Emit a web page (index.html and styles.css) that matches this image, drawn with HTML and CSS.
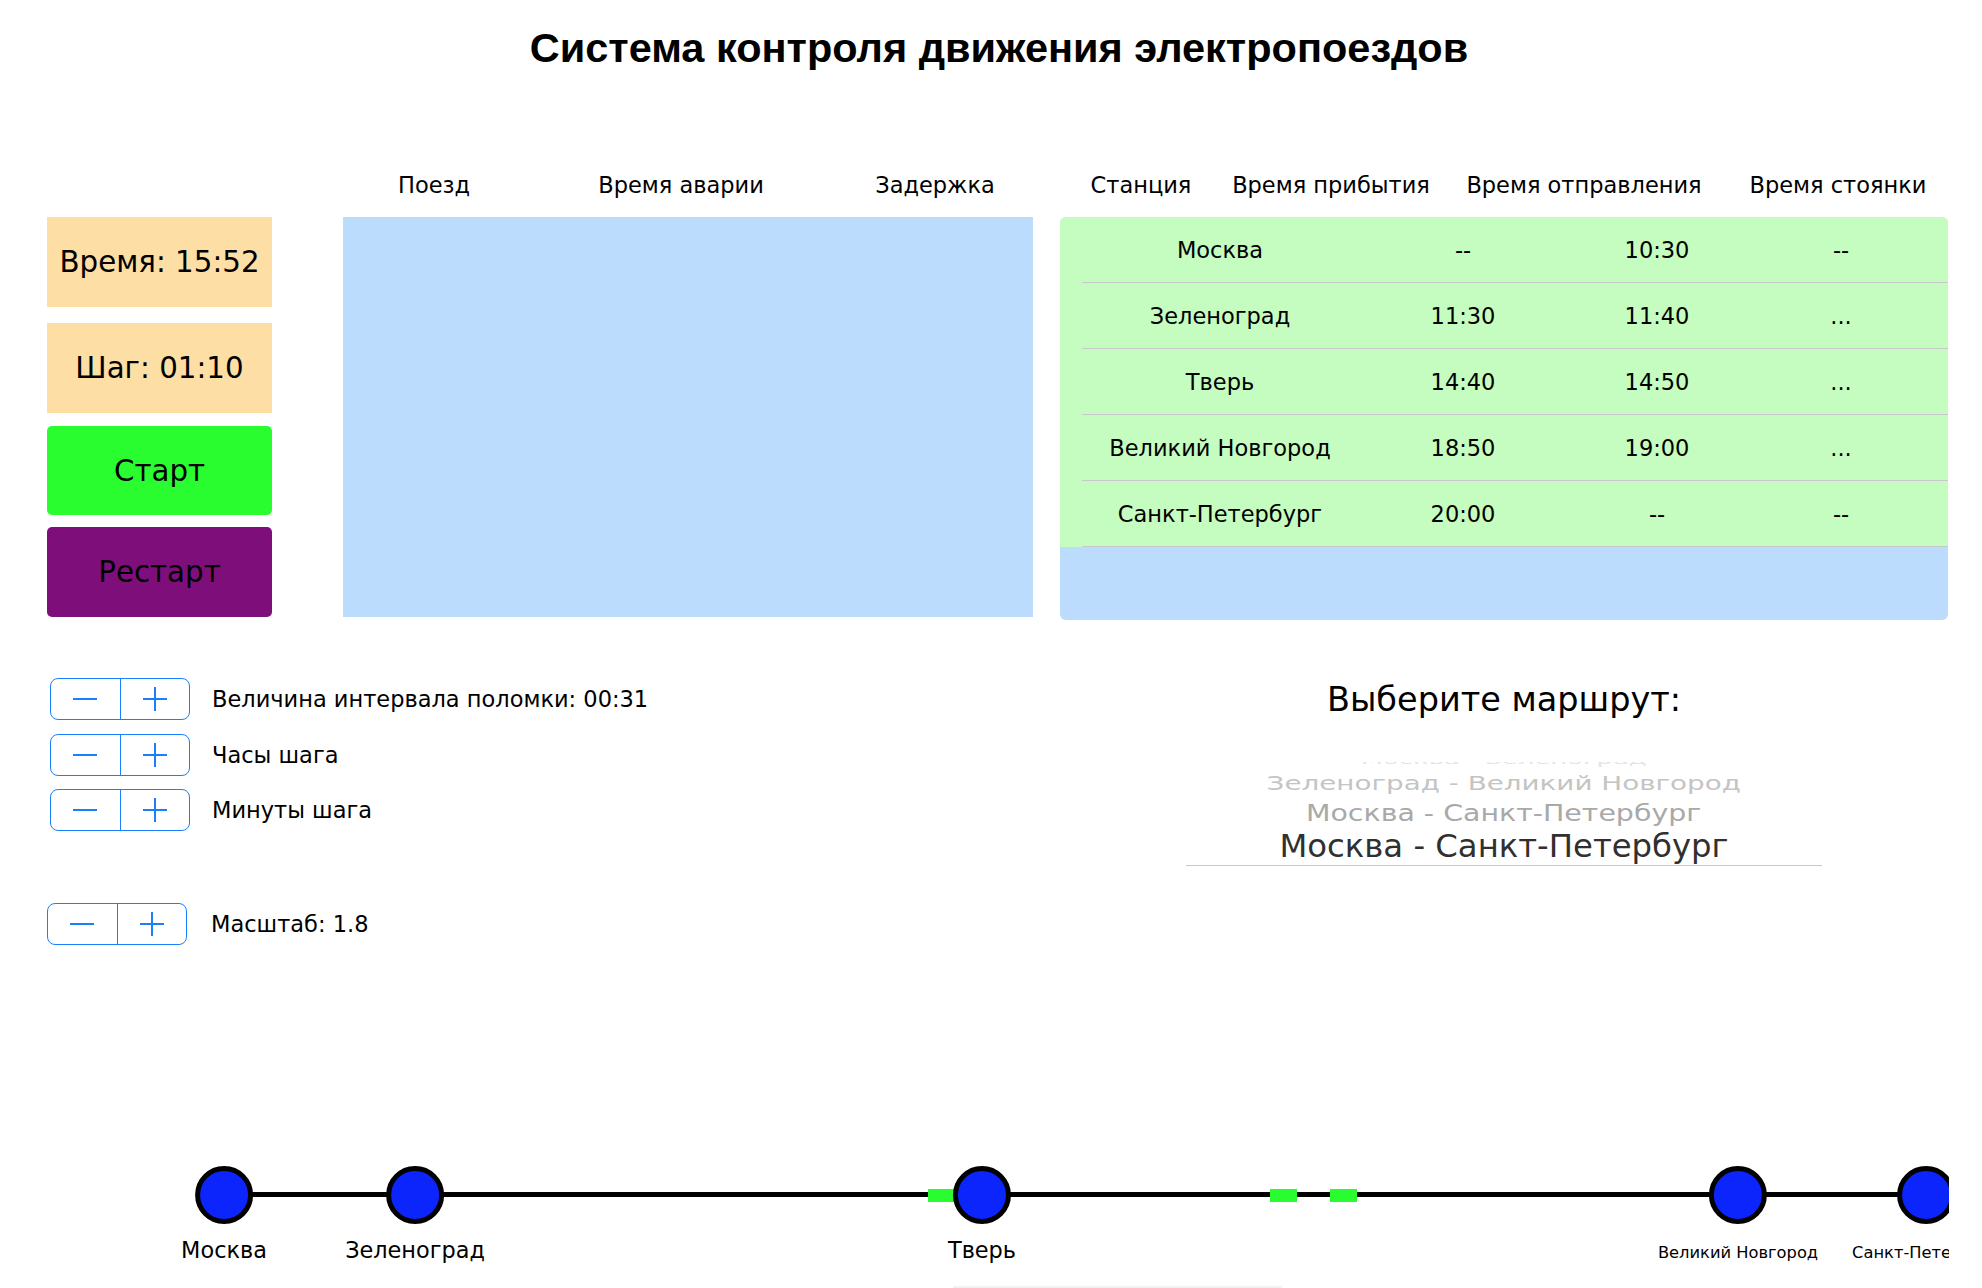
FILE: index.html
```html
<!DOCTYPE html>
<html lang="ru">
<head>
<meta charset="utf-8">
<title>Система контроля движения электропоездов</title>
<link rel="stylesheet" href="styles.css">
</head>
<body>
<div class="app">
  <h1 class="title">Система контроля движения электропоездов</h1>

  <div class="top">
    <div class="left-col">
      <div class="info-box box-time">Время: 15:52</div>
      <div class="info-box box-step">Шаг: 01:10</div>
      <div class="btn btn-start">Старт</div>
      <div class="btn btn-restart">Рестарт</div>
    </div>

    <div class="mid">
      <div class="thead mid-head">
        <span>Поезд</span><span>Время аварии</span><span>Задержка</span>
      </div>
      <div class="accidents"></div>
    </div>

    <div class="right">
      <div class="thead sched-head">
        <span>Станция</span><span>Время прибытия</span><span>Время отправления</span><span>Время стоянки</span>
      </div>
      <div class="schedule">
        <div class="srow"><div class="srow-in"><span>Москва</span><span>--</span><span>10:30</span><span>--</span></div></div>
        <div class="srow"><div class="srow-in"><span>Зеленоград</span><span>11:30</span><span>11:40</span><span>...</span></div></div>
        <div class="srow"><div class="srow-in"><span>Тверь</span><span>14:40</span><span>14:50</span><span>...</span></div></div>
        <div class="srow"><div class="srow-in"><span>Великий Новгород</span><span>18:50</span><span>19:00</span><span>...</span></div></div>
        <div class="srow"><div class="srow-in"><span>Санкт-Петербург</span><span>20:00</span><span>--</span><span>--</span></div></div>
      </div>
    </div>
  </div>

  <div class="lower">
    <div class="controls">
      <div class="ctl">
        <div class="stepper"><span class="st-minus"></span><span class="st-plus"></span></div>
        <span class="ctl-label">Величина интервала поломки: 00:31</span>
      </div>
      <div class="ctl">
        <div class="stepper"><span class="st-minus"></span><span class="st-plus"></span></div>
        <span class="ctl-label">Часы шага</span>
      </div>
      <div class="ctl">
        <div class="stepper"><span class="st-minus"></span><span class="st-plus"></span></div>
        <span class="ctl-label">Минуты шага</span>
      </div>
      <div class="ctl ctl-scale">
        <div class="stepper"><span class="st-minus"></span><span class="st-plus"></span></div>
        <span class="ctl-label">Масштаб: 1.8</span>
      </div>
    </div>

    <div class="route">
      <div class="route-title">Выберите маршрут:</div>
      <div class="picker">
        <div class="pk pk-0">Москва - Зеленоград</div>
        <div class="pk pk-1">Зеленоград - Великий Новгород</div>
        <div class="pk pk-2">Москва - Санкт-Петербург</div>
        <div class="pk pk-3">Москва - Санкт-Петербург</div>
      </div>
    </div>
  </div>

  <div class="map">
    <div class="track"></div>
    <div class="train" style="left:928px"></div>
    <div class="train" style="left:1270px"></div>
    <div class="train" style="left:1330px"></div>
    <div class="node" style="left:224px"><span class="dot"></span><span class="node-label">Москва</span></div>
    <div class="node" style="left:415px"><span class="dot"></span><span class="node-label">Зеленоград</span></div>
    <div class="node" style="left:982px"><span class="dot"></span><span class="node-label">Тверь</span></div>
    <div class="node node-small" style="left:1738px"><span class="dot"></span><span class="node-label">Великий Новгород</span></div>
    <div class="node node-small" style="left:1926px"><span class="dot"></span><span class="node-label">Санкт-Петербург</span></div>
    <div class="scroll-hint"></div>
  </div>
</div>
</body>
</html>
```

FILE: styles.css
```css
* { box-sizing: border-box; }
html, body { margin: 0; padding: 0; background: #fff; }
body {
  width: 1982px;
  height: 1288px;
  overflow: hidden;
  font-family: "DejaVu Sans", "Liberation Sans", sans-serif;
  color: #000;
}
.app { width: 1982px; height: 1288px; position: relative; }

.title {
  margin: 0;
  height: 160px;
  padding-top: 24px;
  padding-left: 16px;
  font-family: "Liberation Sans", Arial, sans-serif;
  font-weight: bold;
  font-size: 41.5px;
  line-height: 48px;
  text-align: center;
}

.top {
  display: flex;
  align-items: flex-start;
  padding-left: 47px;
}
.left-col {
  width: 225px;
  margin-top: 57px;
  display: flex;
  flex-direction: column;
}
.info-box, .btn {
  display: flex;
  align-items: center;
  justify-content: center;
  font-size: 29.3px;
  height: 90px;
}
.info-box { background: #fddea5; }
.box-step { margin-top: 16px; }
.btn { border-radius: 5px; }
.btn-start { background: #2afd2f; margin-top: 13px; height: 89px; }
.btn-restart { background: #7e0f7a; margin-top: 12px; }

.mid { width: 690px; margin-left: 71px; }
.right { width: 888px; margin-left: 27px; }

.thead {
  height: 57px;
  display: grid;
  padding-top: 12px;
  font-size: 22.5px;
  line-height: 27px;
  text-align: center;
  white-space: nowrap;
}
.mid-head { grid-template-columns: 182px 312px 196px; }
.sched-head { grid-template-columns: 162px 218px 288px 220px; }

.accidents { height: 400px; background: #bbdcfd; }

.schedule {
  height: 403px;
  background: #bbdcfd;
  border-radius: 6px;
  overflow: hidden;
}
.srow { background: #c5fcbf; padding-left: 22px; height: 66px; }
.srow-in {
  height: 66px;
  border-bottom: 1px solid #c8c7cc;
  display: grid;
  grid-template-columns: 276px 210px 178px 190px 1fr;
  align-items: center;
  text-align: center;
  font-size: 22.5px;
  white-space: nowrap;
}

.lower {
  display: flex;
  margin-top: 40px;
  height: 440px;
}
.controls {
  width: 1186px;
  padding-top: 18px;
  padding-left: 50px;
  display: flex;
  flex-direction: column;
}
.ctl {
  display: flex;
  align-items: center;
  height: 42px;
  margin-bottom: 13.5px;
}
.ctl-scale { margin-top: 58px; margin-left: -3px; }
.ctl-label { font-size: 22.5px; margin-left: 22px; white-space: nowrap; }
.ctl-scale .ctl-label { margin-left: 24px; }

.stepper {
  width: 140px;
  height: 42px;
  border: 1.5px solid #1a7ffa;
  border-radius: 8px;
  display: flex;
  flex: none;
}
.st-minus, .st-plus {
  flex: 1;
  position: relative;
}
.st-minus { border-right: 1.5px solid #1a7ffa; }
.st-minus::before, .st-plus::before, .st-plus::after {
  content: "";
  position: absolute;
  background: #1a7ffa;
  left: 50%;
  top: 50%;
}
.st-minus::before, .st-plus::before {
  width: 24px; height: 2px; margin-left: -12px; margin-top: -1px;
}
.st-plus::after {
  width: 2px; height: 24px; margin-left: -1px; margin-top: -12px;
}

.route {
  width: 636px;
  display: flex;
  flex-direction: column;
  align-items: center;
}
.route-title {
  margin-top: 20px;
  font-size: 33.5px;
  line-height: 40px;
  white-space: nowrap;
}
.picker {
  margin-top: 42px;
  width: 636px;
  height: 104px;
  padding-bottom: 2px;
  overflow: hidden;
  border-bottom: 1px solid #c8c8c8;
  display: flex;
  flex-direction: column;
  align-items: center;
  font-size: 32.3px;
}
.pk { white-space: nowrap; transform-origin: center; flex: none; }
.pk-0 { height: 14px; line-height: 14px; margin-top: -9px; color: #e4e4e4; transform: scale(0.8, 0.4); }
.pk-1 { height: 32px; line-height: 32px; color: #c4c4c4; transform: scale(0.86, 0.62); }
.pk-2 { height: 29px; line-height: 29px; color: #a9a9a9; transform: scale(0.88, 0.71); }
.pk-3 { height: 36px; line-height: 36px; color: #303030; }

.map {
  position: absolute;
  left: 0;
  top: 1100px;
  width: 1949px;
  height: 188px;
  overflow: hidden;
}
.track {
  position: absolute;
  left: 224px; right: 0;
  top: 92px; height: 5px;
  background: #000;
}
.train {
  position: absolute;
  top: 89px;
  width: 27px; height: 13px;
  background: #2afd2f;
}
.node {
  position: absolute;
  top: 66px;
  transform: translateX(-50%);
  display: flex;
  flex-direction: column;
  align-items: center;
}
.dot {
  width: 58px; height: 58px;
  border: 5px solid #000;
  border-radius: 50%;
  background: #0b25fc;
}
.node-label { font-size: 22.4px; line-height: 26px; margin-top: 13px; white-space: nowrap; }
.node-small .node-label { font-size: 16.3px; line-height: 19px; margin-top: 19px; }
.scroll-hint {
  position: absolute;
  left: 953px; width: 329px;
  bottom: 0; height: 3px;
  background: linear-gradient(#ffffff, #ececec);
}
```
